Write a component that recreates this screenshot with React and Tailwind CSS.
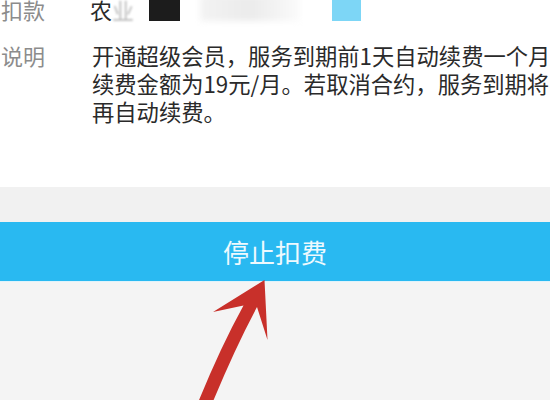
import React from 'react';

const font = { fontFamily: '"Noto Sans CJK SC", "Noto Sans", sans-serif' };

function Arrow() {
  // red hand-drawn pointer towards the button
  return (
    <svg
      className="absolute left-0 top-0 pointer-events-none"
      width="550"
      height="400"
      viewBox="0 0 550 400"
    >
      <path
        d="M264.5 280 L213 312 L243.5 305.5 Q219 350 195 410 L209.5 410 Q233 352 257 307 L267.5 340 Z"
        fill="#c8302a"
      />
    </svg>
  );
}

export default function App() {
  return (
    <div className="relative w-[550px] h-[400px] overflow-hidden bg-[#f4f4f4]" style={font}>
      <div className="bg-white mt-[-5px] h-[192px] overflow-hidden">
        {/* 扣款 row */}
        <div className="flex items-center h-[28px] text-[22px] leading-[28px]">
          <div className="w-[90px] pl-[1px] text-[#8c8c8c] shrink-0">扣款</div>
          <div className="flex items-center">
            <span className="text-[#2a2a2a]">农</span>
            <span className="text-[#bbb] blur-[1px]">业</span>
            <div className="w-[31px] h-[26px] bg-[#1c1c1c] ml-[15px] self-start" />
            <div className="w-[100px] h-[26px] ml-[20px] self-start bg-gradient-to-r from-[#f3f3f3] via-[#ebebeb] to-[#fbfbfb] blur-[3px]" />
            <div className="w-[29px] h-[26px] ml-[32px] self-start bg-[#7dd6f6]" />
          </div>
        </div>

        {/* 说明 row */}
        <div className="flex mt-[18px] text-[22.3px] leading-[28px]">
          <div className="w-[92px] pl-[1px] text-[#8c8c8c] shrink-0 text-[22px]">说明</div>
          <div className="text-[#2a2a2a] whitespace-nowrap">
            <div>开通超级会员，服务到期前1天自动续费一个月，</div>
            <div>续费金额为19元/月。若取消合约，服务到期将不</div>
            <div>再自动续费。</div>
          </div>
        </div>
      </div>

      <div className="h-[35px] bg-[#f1f1f1]" />

      <button className="w-full h-[60px] bg-[#29b9f1] flex items-center justify-center text-[26px] text-[#eef9fe] border-b border-[#dff3fb]">
        停止扣费
      </button>

      <Arrow />
    </div>
  );
}
